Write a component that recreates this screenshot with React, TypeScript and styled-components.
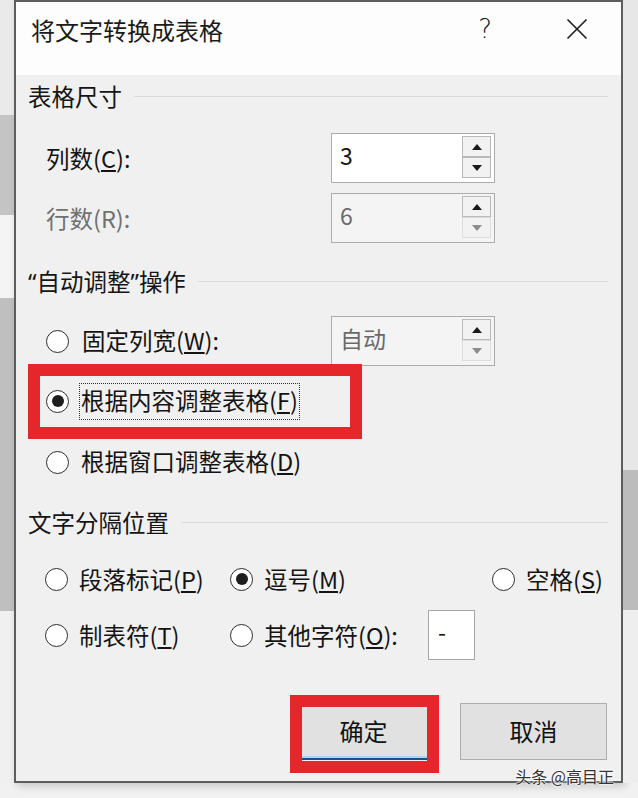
import React from "react";
import styled, { createGlobalStyle } from "styled-components";

const GlobalStyle = createGlobalStyle`
  html, body {
    margin: 0;
    padding: 0;
    background: #f1f1f1;
  }
  body {
    font-family: "Noto Sans CJK SC", "Noto Sans", sans-serif;
    color: #141414;
  }
  *, *::before, *::after {
    box-sizing: border-box;
  }
`;

const Page = styled.div`
  position: relative;
  width: 638px;
  height: 798px;
  overflow: hidden;
  display: grid;
  grid-template-columns: 14px 609px 15px;
  grid-template-rows: 783px 15px;
  background: #f1f1f1;
`;

const Strip = styled.div`
  display: flex;
  flex-direction: column;
`;

const Band = styled.div<{ $h: number; $tone: string }>`
  height: ${(p) => p.$h}px;
  background: ${(p) => p.$tone};
`;

const Dialog = styled.div`
  border: 2px solid #5d5d5d;
  background: #f0f0f0;
  display: flex;
  flex-direction: column;
  box-shadow: 3px 3px 8px rgba(0, 0, 0, 0.18);
`;

const TitleBar = styled.div`
  height: 73px;
  flex-shrink: 0;
  background: #fdfdfd;
  display: flex;
  align-items: center;
  padding: 0 33px 19px 15px;
`;

const TitleText = styled.div`
  flex: 1;
  font-size: 24px;
  color: #1b1b1b;
`;

const HelpMark = styled.span`
  font-family: "DejaVu Sans", sans-serif;
  font-weight: 200;
  font-size: 26px;
  color: #222;
  margin-right: 74px;
`;

const Body = styled.div`
  flex: 1;
  padding: 6px 13px 0 12px;
  display: flex;
  flex-direction: column;
`;

const GroupHeader = styled.div<{ $top: number }>`
  display: flex;
  align-items: center;
  height: 30px;
  margin-top: ${(p) => p.$top}px;
  font-size: 23.5px;
  color: #151515;
  &::after {
    content: "";
    flex: 1;
    height: 1px;
    margin-left: 12px;
    background: #dadada;
  }
`;

const Quote = styled.span`
  font-family: "Noto Sans", sans-serif;
`;

const FieldRow = styled.div<{ $top: number }>`
  display: grid;
  grid-template-columns: 303px 164px;
  align-items: center;
  height: 50px;
  margin-top: ${(p) => p.$top}px;
`;

const FieldLabel = styled.span<{ $disabled?: boolean }>`
  padding-left: 18px;
  font-size: 23.5px;
  color: ${(p) => (p.$disabled ? "#707070" : "#141414")};
`;

const SpinBox = styled.div<{ $disabled?: boolean }>`
  height: 50px;
  border: 1px solid #acacac;
  background: ${(p) => (p.$disabled ? "#f4f4f4" : "#ffffff")};
  display: flex;
  align-items: flex-start;
  justify-content: space-between;
  padding: 2px 3px 0 8px;
`;

const SpinValue = styled.span<{ $disabled?: boolean }>`
  font-size: 23px;
  line-height: 38px;
  color: ${(p) => (p.$disabled ? "#6a6a6a" : "#141414")};
`;

const SpinButtons = styled.div`
  display: flex;
  flex-direction: column;
  width: 29px;
  height: 42px;
`;

const SpinButton = styled.div<{ $flat?: boolean }>`
  flex: 1;
  border: 1px solid ${(p) => (p.$flat ? "#dcdcdc" : "#b9b9b9")};
  background: #f2f2f2;
  display: flex;
  align-items: center;
  justify-content: center;
`;

const Arrow = styled.span<{ $down?: boolean; $dim?: boolean }>`
  width: 0;
  height: 0;
  border-left: 5px solid transparent;
  border-right: 5px solid transparent;
  ${(p) => (p.$down ? "border-top" : "border-bottom")}: 6px solid
    ${(p) => (p.$dim ? "#8c8c8c" : "#1a1a1a")};
`;

const OptionRow = styled.div<{ $top: number; $marked?: boolean }>`
  position: relative;
  display: flex;
  align-items: center;
  height: 50px;
  padding-left: 18px;
  gap: 10px;
  margin-top: ${(p) => p.$top}px;
  font-size: 23.5px;
  &::after {
    content: "";
    display: ${(p) => (p.$marked ? "block" : "none")};
    position: absolute;
    top: -12px;
    left: 0;
    width: 334px;
    height: 75px;
    border: 12px solid #e5262b;
    pointer-events: none;
  }
`;

const OptionInline = styled.div<{ $indent?: number }>`
  display: flex;
  align-items: center;
  gap: 11px;
  padding-left: ${(p) => p.$indent ?? 0}px;
  font-size: 23.5px;
`;

const Radio = styled.span<{ $checked?: boolean }>`
  width: 23px;
  height: 23px;
  flex-shrink: 0;
  border-radius: 50%;
  border: 1.6px solid #2e2e2e;
  background: #ffffff;
  display: flex;
  align-items: center;
  justify-content: center;
  &::after {
    content: "";
    width: 12px;
    height: 12px;
    border-radius: 50%;
    background: #1e1e1e;
    display: ${(p) => (p.$checked ? "block" : "none")};
  }
`;

const OptionText = styled.span<{ $focused?: boolean }>`
  padding: 0 1px;
  height: 37px;
  line-height: 33px;
  border: 1px ${(p) => (p.$focused ? "dotted #333" : "solid transparent")};
`;

const SepGrid = styled.div`
  display: grid;
  grid-template-columns: 185px 262px auto;
  grid-auto-rows: 50px;
  row-gap: 6px;
  align-items: center;
  padding-left: 17px;
  margin-top: 17px;
`;

const CharBox = styled.div`
  width: 47px;
  height: 50px;
  margin-left: 19px;
  background: #ffffff;
  border: 1px solid #a6a6a6;
  font-size: 23px;
  line-height: 40px;
  padding-left: 9px;
`;

const ButtonRow = styled.div`
  display: flex;
  justify-content: flex-end;
  gap: 23px;
  margin-top: 43px;
  padding-right: 1px;
`;

const Button = styled.div<{ $primary?: boolean }>`
  position: relative;
  width: 147px;
  height: 57px;
  background: #e1e1e1;
  border: 1px solid #adadad;
  border-bottom: ${(p) => (p.$primary ? "2px solid #1b4f9c" : "1px solid #adadad")};
  box-shadow: ${(p) => (p.$primary ? "inset 0 -2px 0 #a8d8f6" : "none")};
  display: flex;
  align-items: center;
  justify-content: center;
  padding-bottom: 2px;
  font-size: 24px;
  color: #121212;
  &::after {
    content: "";
    display: ${(p) => (p.$primary ? "block" : "none")};
    position: absolute;
    top: -9px;
    bottom: -15px;
    left: -1px;
    right: -3px;
    border: 12px solid #e5262b;
    pointer-events: none;
  }
`;

const Watermark = styled.div`
  position: absolute;
  right: 24px;
  top: 765px;
  font-size: 16px;
  line-height: 22px;
  color: #333;
  text-shadow: 0 0 2px #fff, 0 0 2px #fff, 0 0 3px #fff;
`;

function CloseIcon() {
  return (
    <svg width="22" height="22" viewBox="0 0 22 22">
      <path d="M1.5 1.5 L20.5 20.5 M20.5 1.5 L1.5 20.5" stroke="#222" strokeWidth="1.7" fill="none" />
    </svg>
  );
}

function Spinner({ value, disabled }: { value: string; disabled?: boolean }) {
  return (
    <SpinBox $disabled={disabled}>
      <SpinValue $disabled={disabled}>{value}</SpinValue>
      <SpinButtons>
        <SpinButton>
          <Arrow />
        </SpinButton>
        <SpinButton $flat={disabled}>
          <Arrow $down $dim={disabled} />
        </SpinButton>
      </SpinButtons>
    </SpinBox>
  );
}

export default function App() {
  return (
    <>
      <GlobalStyle />
      <Page>
        <Strip>
          <Band $h={115} $tone="#eaeaea" />
          <Band $h={100} $tone="#c4c4c4" />
          <Band $h={83} $tone="#f4f4f4" />
          <Band $h={313} $tone="#bfbfbf" />
          <Band $h={172} $tone="#f0f0f0" />
        </Strip>

        <Dialog>
          <TitleBar>
            <TitleText>将文字转换成表格</TitleText>
            <HelpMark>?</HelpMark>
            <CloseIcon />
          </TitleBar>
          <Body>
            <GroupHeader $top={0}>表格尺寸</GroupHeader>
            <FieldRow $top={22}>
              <FieldLabel>
                列数(<u>C</u>):
              </FieldLabel>
              <Spinner value="3" />
            </FieldRow>
            <FieldRow $top={10}>
              <FieldLabel $disabled>行数(R):</FieldLabel>
              <Spinner value="6" disabled />
            </FieldRow>

            <GroupHeader $top={23}>
              <span>
                <Quote>“</Quote>自动调整<Quote>”</Quote>操作
              </span>
            </GroupHeader>
            <FieldRow $top={20}>
              <OptionInline $indent={18}>
                <Radio />
                <OptionText>
                  固定列宽(<u>W</u>):
                </OptionText>
              </OptionInline>
              <Spinner value="自动" disabled />
            </FieldRow>
            <OptionRow $top={10} $marked>
              <Radio $checked />
              <OptionText $focused>
                根据内容调整表格(<u>F</u>)
              </OptionText>
            </OptionRow>
            <OptionRow $top={11}>
              <Radio />
              <OptionText>
                根据窗口调整表格(<u>D</u>)
              </OptionText>
            </OptionRow>

            <GroupHeader $top={20}>文字分隔位置</GroupHeader>
            <SepGrid>
              <OptionInline>
                <Radio />
                <span>
                  段落标记(<u>P</u>)
                </span>
              </OptionInline>
              <OptionInline>
                <Radio $checked />
                <span>
                  逗号(<u>M</u>)
                </span>
              </OptionInline>
              <OptionInline>
                <Radio />
                <span>
                  空格(<u>S</u>)
                </span>
              </OptionInline>
              <OptionInline>
                <Radio />
                <span>
                  制表符(<u>T</u>)
                </span>
              </OptionInline>
              <OptionInline>
                <Radio />
                <span>
                  其他字符(<u>O</u>):
                </span>
                <CharBox>-</CharBox>
              </OptionInline>
            </SepGrid>

            <ButtonRow>
              <Button $primary>确定</Button>
              <Button>取消</Button>
            </ButtonRow>
          </Body>
        </Dialog>

        <Strip>
          <Band $h={470} $tone="#e7e7e7" />
          <Band $h={140} $tone="#bcbcbc" />
          <Band $h={173} $tone="#eeeeee" />
        </Strip>

        <Watermark>头条 @高目正</Watermark>
      </Page>
    </>
  );
}
